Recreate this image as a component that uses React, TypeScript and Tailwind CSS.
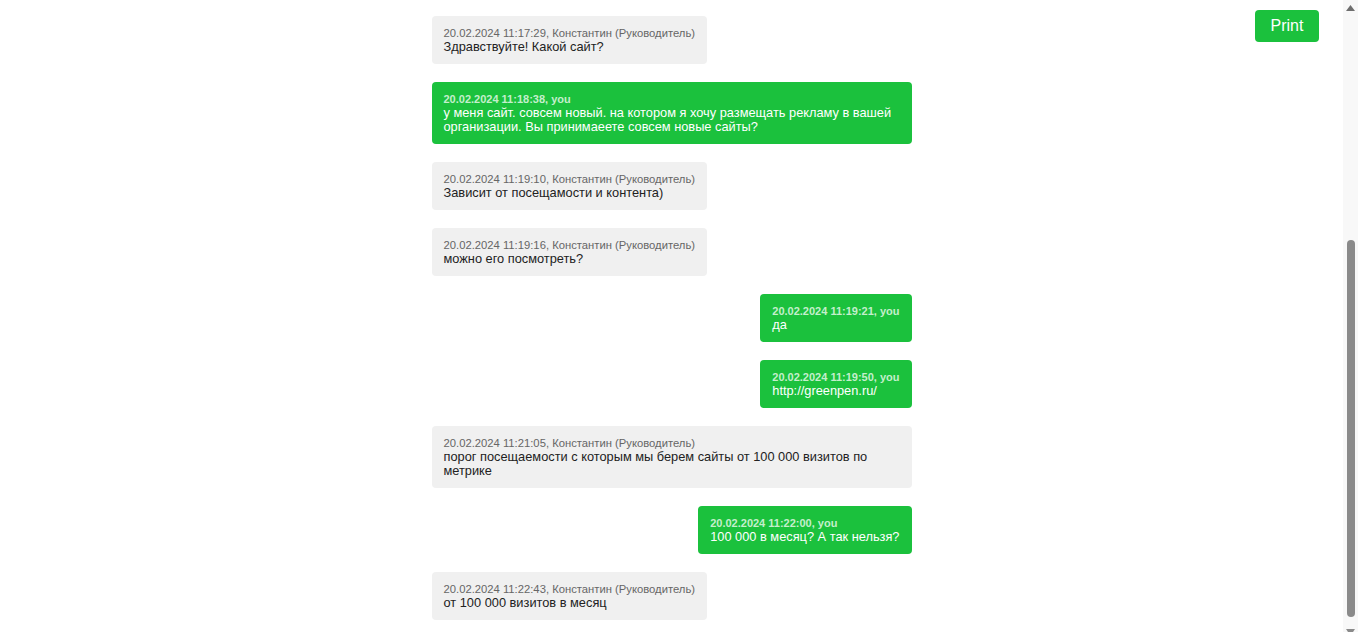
import React from 'react';

type Message = { id: number; time: string; author: string; text: string; mine: boolean };

const messages: Message[] = [
  { id: 1, time: '20.02.2024 11:17:29', author: 'Константин (Руководитель)', text: 'Здравствуйте! Какой сайт?', mine: false },
  { id: 2, time: '20.02.2024 11:18:38', author: 'you', text: 'у меня сайт. совсем новый. на котором я хочу размещать рекламу в вашей организации. Вы принимаеете совсем новые сайты?', mine: true },
  { id: 3, time: '20.02.2024 11:19:10', author: 'Константин (Руководитель)', text: 'Зависит от посещамости и контента)', mine: false },
  { id: 4, time: '20.02.2024 11:19:16', author: 'Константин (Руководитель)', text: 'можно его посмотреть?', mine: false },
  { id: 5, time: '20.02.2024 11:19:21', author: 'you', text: 'да', mine: true },
  { id: 6, time: '20.02.2024 11:19:50', author: 'you', text: 'http://greenpen.ru/', mine: true },
  { id: 7, time: '20.02.2024 11:21:05', author: 'Константин (Руководитель)', text: 'порог посещаемости с которым мы берем сайты от 100 000 визитов по метрике', mine: false },
  { id: 8, time: '20.02.2024 11:22:00', author: 'you', text: '100 000 в месяц? А так нельзя?', mine: true },
  { id: 9, time: '20.02.2024 11:22:43', author: 'Константин (Руководитель)', text: 'от 100 000 визитов в месяц', mine: false },
];

const App = () => {
  return (
    <div className="h-[632px] flex overflow-hidden bg-white font-['Liberation_Sans',Arial,sans-serif]">
      {/* Page */}
      <div className="relative flex-1">
        {/* Chat */}
        <div className="max-w-[480px] mx-auto pt-4 flex flex-col gap-[18px]">
          {messages.map((m) => (
            <div
              key={m.id}
              className={
                m.mine
                  ? 'self-end max-w-full rounded px-3 pt-[11px] pb-[10px] bg-[#1bc13d]'
                  : 'self-start max-w-full rounded px-3 pt-[11px] pb-[10px] bg-[#f0f0f0]'
              }
            >
              <div
                className={
                  m.mine
                    ? 'text-[11px] leading-[13px] font-bold text-[#c4efcc]'
                    : 'text-[11.25px] leading-[13px] text-[#666666]'
                }
              >
                {m.time}, {m.author}
              </div>
              <div className={m.mine ? 'text-[12.8px] leading-[14px] text-white' : 'text-[12.8px] leading-[14px] text-[#222222]'}>
                {m.text}
              </div>
            </div>
          ))}
        </div>

        {/* Print */}
        <button className="absolute top-[10px] right-6 w-16 h-8 rounded bg-[#1bc13d] text-white text-base">
          Print
        </button>
      </div>

      {/* Scrollbar */}
      <div className="w-[15px] flex flex-col bg-[#f8f8f8]">
        <div className="h-[15px] flex justify-center pt-[5px]">
          <svg width="9" height="6" viewBox="0 0 9 6">
            <path d="M4.5 0L9 6H0z" fill="#6e6e6e" />
          </svg>
        </div>
        <div className="flex-1 flex flex-col justify-end">
          <div className="h-[377px] w-2 mx-auto rounded-full bg-[#8a8a8a]" />
        </div>
        <div className="h-[15px] flex justify-center items-end">
          <svg width="9" height="3" viewBox="0 0 9 3">
            <path d="M0 0H9L7 3H2z" fill="#8a8a8a" />
          </svg>
        </div>
      </div>
    </div>
  );
};

export default App;
